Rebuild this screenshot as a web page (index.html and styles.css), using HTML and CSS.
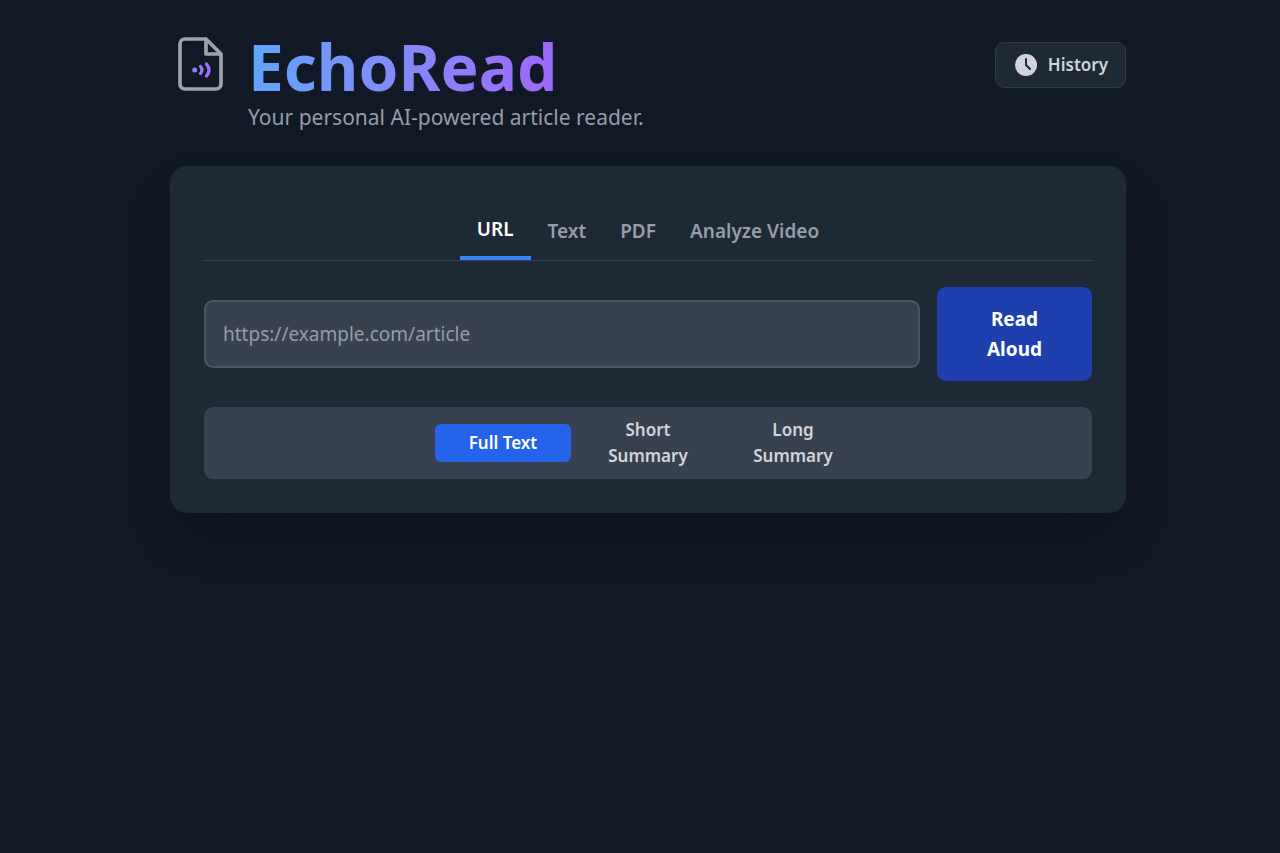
FILE: index.html
```html
<!DOCTYPE html>
<html lang="en">
<head>
<meta charset="utf-8">
<meta name="viewport" content="width=device-width, initial-scale=1">
<title>EchoRead</title>
<link rel="stylesheet" href="styles.css">
</head>
<body>
<div class="page">
  <header class="header">
    <div class="brand">
      <svg class="logo" viewBox="0 0 60 60" fill="none" aria-hidden="true">
        <defs>
          <linearGradient id="wave" x1="22" y1="27" x2="38" y2="45" gradientUnits="userSpaceOnUse">
            <stop offset="0" stop-color="#60a5fa"/>
            <stop offset=".5" stop-color="#9c74fa"/>
            <stop offset="1" stop-color="#a06bf6"/>
          </linearGradient>
        </defs>
        <path d="M36 5H15a5 5 0 0 0-5 5v40a5 5 0 0 0 5 5h31a5 5 0 0 0 5-5V20L36 5v15h15" stroke="#9ca3af" stroke-width="3.700" stroke-linejoin="round"/>
        <circle cx="24.700" cy="36" r="2.500" fill="url(#wave)"/>
        <path d="M30.500 32.500q3 3.500 0 7M36.500 30q5 6 0 12" stroke="url(#wave)" stroke-width="3.300" stroke-linecap="round"/>
      </svg>
      <div class="brand-text">
        <h1 class="title">EchoRead</h1>
        <p class="tagline">Your personal AI-powered article reader.</p>
      </div>
    </div>
    <button class="history" type="button">
      <svg class="history-icon" viewBox="0 0 22 22" aria-hidden="true">
        <circle cx="11" cy="11" r="11" fill="currentColor"/>
        <path d="M11 5v6l4 4" fill="none" stroke="#1f2937" stroke-width="2" stroke-linecap="round" stroke-linejoin="round"/>
      </svg>
      History
    </button>
  </header>
  <main class="card">
    <nav class="tabs" aria-label="Source">
      <button class="tab tab-active" type="button">URL</button>
      <button class="tab" type="button">Text</button>
      <button class="tab" type="button">PDF</button>
      <button class="tab" type="button">Analyze Video</button>
    </nav>
    <form class="reader">
      <input class="url" type="url" aria-label="Article URL" placeholder="https://example.com/article">
      <button class="read" type="button">Read Aloud</button>
    </form>
    <div class="modes" role="group" aria-label="Reading mode">
      <button class="mode mode-active" type="button">Full Text</button>
      <button class="mode" type="button">Short Summary</button>
      <button class="mode" type="button">Long Summary</button>
    </div>
  </main>
</div>
</body>
</html>
```
FILE: styles.css
```css
* {
  box-sizing: border-box;
}

body {
  margin: 0;
  min-height: 100vh;
  background: #111826;
  color: #d1d5db;
  font-family: "Noto Sans", sans-serif;
}

button,
input {
  margin: 0;
  border: 0;
  font: inherit;
}

button {
  background: none;
  color: inherit;
  cursor: pointer;
}

.page {
  max-width: 988px;
  margin: 0 auto;
  padding: 34px 8px 34px 24px;
}

.header {
  display: flex;
  align-items: flex-start;
  justify-content: space-between;
  margin-bottom: 34px;
}

.brand {
  display: flex;
  gap: 18px;
}

.logo {
  width: 60px;
  height: 60px;
}

.title {
  width: fit-content;
  margin: 0 0 2px;
  background: linear-gradient(to right, #60a5fa, #818cf8 45%, #9f67fa);
  background-clip: text;
  -webkit-background-clip: text;
  color: transparent;
  font-size: 64px;
  font-weight: 700;
  line-height: 66px;
}

.tagline {
  margin: 0;
  color: #969da9;
  font-size: 21px;
  line-height: 30px;
}

.history {
  display: flex;
  align-items: center;
  gap: 11px;
  margin-top: 8px;
  padding: 8px 17px 8px 19px;
  border: 1px solid #2f3b48;
  border-radius: 9px;
  background: #1e2936;
  font-size: 17px;
  font-weight: 600;
  line-height: 28px;
}

.history-icon {
  width: 22px;
  height: 22px;
}

.card {
  padding: 34px;
  border-radius: 17px;
  background: #1e2936;
  box-shadow: 0 26px 52px -12px rgb(0 0 0 / 25%);
}

.tabs {
  display: flex;
  justify-content: center;
  margin-bottom: 26px;
  border-bottom: 1px solid #374151;
}

.tab {
  padding: 14px 17px 12px;
  color: #969da9;
  font-size: 19px;
  font-weight: 600;
  line-height: 34px;
}

.tab-active {
  border-bottom: 4px solid #3b82f6;
  color: #fff;
  line-height: 30px;
}

.reader {
  display: flex;
  align-items: center;
  gap: 17px;
  margin-bottom: 26px;
}

.url {
  flex: 1;
  min-width: 0;
  height: 68px;
  padding: 0 17px;
  border: 2px solid #4b5563;
  border-radius: 9px;
  background: #374150;
  color: #fff;
  font-size: 19px;
}

.url::placeholder {
  color: #969da9;
}

.read {
  width: 155px;
  padding: 17px 34px;
  border-radius: 9px;
  background: #1e40af;
  color: #fff;
  font-size: 19px;
  font-weight: 700;
  line-height: 30px;
}

.modes {
  display: flex;
  align-items: center;
  justify-content: center;
  gap: 9px;
  padding: 10px;
  border-radius: 9px;
  background: #374150;
}

.mode {
  width: 136px;
  padding: 0 17px;
  border-radius: 6px;
  font-size: 17px;
  font-weight: 600;
  line-height: 26px;
}

.mode-active {
  padding: 6px 17px;
  background: #2563eb;
  color: #fff;
}
```
